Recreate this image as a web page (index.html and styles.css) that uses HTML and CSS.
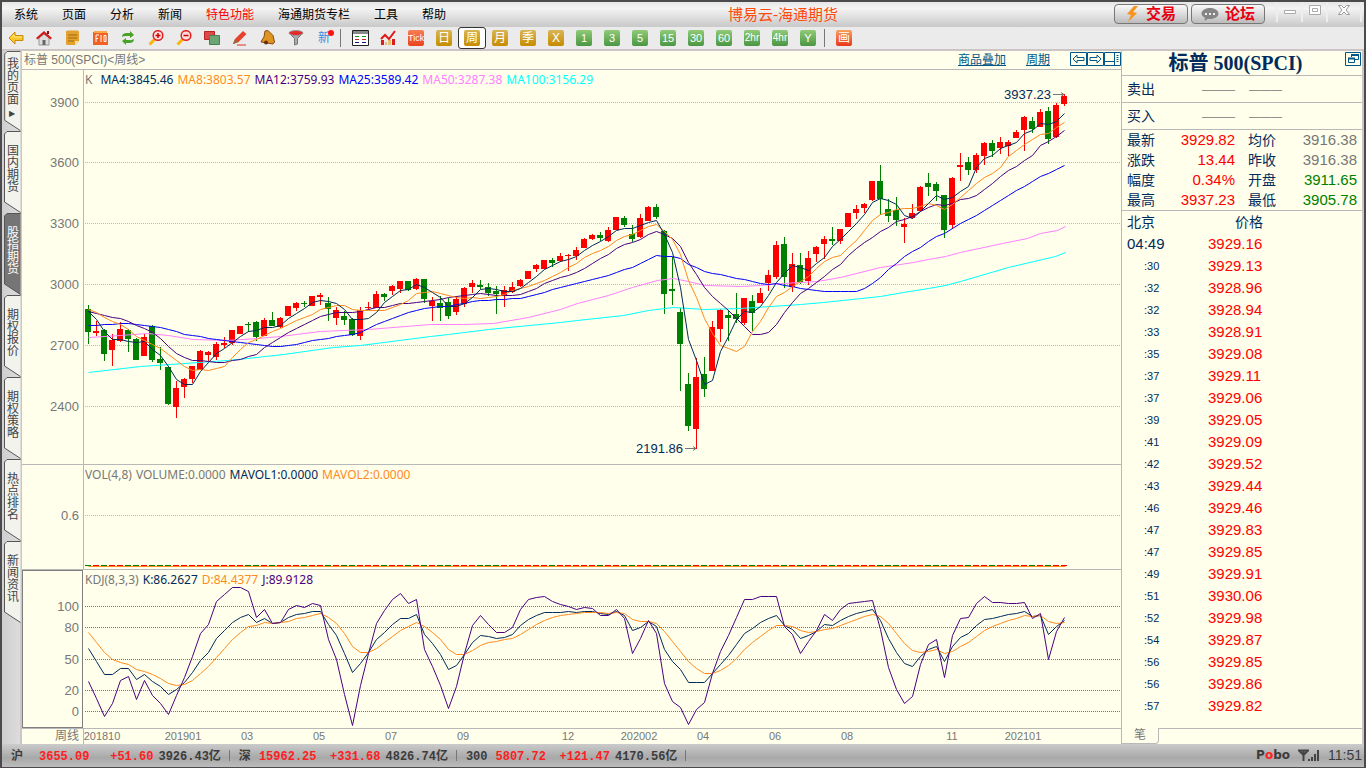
FILE: index.html
```html
<!DOCTYPE html>
<html lang="zh-CN">
<head>
<meta charset="utf-8">
<title>博易云-海通期货</title>
<link rel="stylesheet" href="styles.css">
</head>
<body>
<div class="window">
  <header class="titlebar">
    <nav class="menu">
      <button>系统</button><button>页面</button><button>分析</button><button>新闻</button><button class="hot">特色功能</button><button>海通期货专栏</button><button>工具</button><button>帮助</button>
    </nav>
    <h1 class="app-name">博易云-海通期货</h1>
    <div class="title-right">
      <button class="pill"><svg width="14" height="16" viewBox="0 0 14 16"><path d="M8 0L1 8l4 1-3 7 9-9-4-1 5-6z" fill="#f7941d"/></svg>交易</button>
      <button class="pill"><svg width="18" height="15" viewBox="0 0 18 15"><path d="M9 1c5 0 8.500 2.500 8.500 5.500S14 12 9 12q-1 0-2-.2L3.500 14l.5-3.200C2 9.800.5 8.300.5 6.500.5 3.500 4 1 9 1z" fill="#858585"/><path d="M4 6h2v2H4zM8 6h2v2H8zM12 6h2v2h-2z" fill="#eee"/></svg>论坛</button>
      <div class="win-buttons">
        <button aria-label="最小化"><svg width="12" height="10"><path d="M.5 5.500h11v3H.5z" fill="#fff" stroke="#aaa"/></svg></button>
        <button aria-label="最大化"><svg width="12" height="10"><path d="M.5.5h11v9H.5zM3.500 3.500h5v3h-5z" fill="#fff" stroke="#aaa"/></svg></button>
        <button class="wide" aria-label="关闭"><svg width="12" height="10"><path d="M.5.500h3L6 3 8.500.5h3L8 5l3.500 4.500h-3L6 7 3.500 9.500h-3L4 5z" fill="#fff" stroke="#999"/></svg></button>
      </div>
    </div>
  </header>

  <div class="toolbar">
    <button aria-label="后退"><svg width="16" height="16"><path d="M1 8l6-6v3.500h8v5H7V14z" fill="#fcc62b" stroke="#c98a0d"/><path d="M3 8l3-3v2h8" fill="none" stroke="#ffe98a"/></svg></button>
    <button aria-label="主页"><svg width="16" height="16"><path d="M3 8v7h10V8L8 4z" fill="#ddd" stroke="#999"/><path d="M6.500 10h3v5h-3z" fill="#666"/><path d="M0 8l8-7 8 7-1.500 1.500L8 4 1.500 9.500z" fill="#d01c1c"/><path d="M11 1h2v3h-2z" fill="#8c1010"/></svg></button>
    <button aria-label="便笺"><svg width="16" height="16"><path d="M2 2q0-1.500 1.500-1.500h10Q15 .5 15 2v9l-4 4H3.500Q2 15 2 13.500z" fill="#e3a230"/><path d="M4 5h9M4 8h9M4 11h6" stroke="#a06808"/><path d="M11 15v-4h4z" fill="#ffe08a"/></svg></button>
    <button aria-label="F10"><svg width="17" height="16"><path d="M1 2h5l1 1h9v12H1z" fill="#f4601f"/><path d="M2 2h13" stroke="#f7a84a" stroke-width="2"/><path d="M4 12V5h3M4 8.500h2M9 5v7M12 5.500h2v6h-2z" fill="none" stroke="#fff"/></svg></button>
    <button aria-label="刷新"><svg width="16" height="16"><path d="M2 7q0-4 5-4h3V1l4 4-4 3V6H7Q4 5.500 2 7zM14 9q0 4-5 4H6v2l-4-4 4-3v2h3q3 .5 5-1z" fill="#48a226"/></svg></button>
    <button aria-label="放大"><svg width="16" height="16"><path d="M1.500 14.500L7 9" stroke="#fab514" stroke-width="3"/><circle cx="10" cy="5.500" r="4.800" fill="#fdd" stroke="#e02222" stroke-width="1.500"/><path d="M7.500 5.500h5M10 3v5" stroke="#c00" stroke-width="1.500"/></svg></button>
    <button aria-label="缩小"><svg width="16" height="16"><path d="M1.500 14.500L7 9" stroke="#fab514" stroke-width="3"/><circle cx="10" cy="5.500" r="4.800" fill="#fdd" stroke="#e02222" stroke-width="1.500"/><path d="M7.500 5.500h5" stroke="#c00" stroke-width="1.500"/></svg></button>
    <button aria-label="叠加"><svg width="16" height="16"><path d="M.5 1.500h10v8H.5z" fill="#dd4848" stroke="#b22"/><path d="M5.500 5.500h10v9h-10z" fill="#6aa573" stroke="#49804f"/></svg></button>
    <button aria-label="画线"><svg width="16" height="16"><path d="M1 14l2-5 8-8 3.500 3-8 8z" fill="#e8402a"/><path d="M1 14l2-5 3.500 3z" fill="#9a6a3a"/><path d="M5 15h9" stroke="#e03020"/></svg></button>
    <button aria-label="预警"><svg width="16" height="16"><path d="M5 1l3-.5 5 5 1.500 6.500-1.500 2L1 12l1-2 2-3z" fill="#dd9420" stroke="#8a4b12"/><circle cx="6" cy="12.500" r="2" fill="#6b2d10"/></svg></button>
    <button aria-label="筛选"><svg width="16" height="16"><path d="M1 3l5.500 5.500V15l3-1V8.500L15 3z" fill="#aaa" stroke="#777"/><ellipse cx="8" cy="3" rx="7" ry="2.500" fill="#e52a2a" stroke="#999"/></svg></button>
    <button class="new-item">新<i></i></button>
    <span class="sep"></span>
    <button aria-label="报价表"><svg width="17" height="16"><path d="M.5.500h16v15H.5z" fill="#fff" stroke="#222"/><path d="M1 2.500h15" stroke="#888" stroke-width="3"/><path d="M3 6.500h4M10 6.500h4" stroke="#1a8a1a"/><path d="M3 9.500h4M10 9.500h4" stroke="#c22"/><path d="M3 12.500h4M10 12.500h4" stroke="#118"/></svg></button>
    <button aria-label="走势图"><svg width="17" height="16"><path d="M1 10h3v5H1zM12 9h3v6h-3z" fill="#d81e1e"/><path d="M5 12h2v3H5zM8 10h3v5H8z" fill="#e8c070"/><path d="M1 9l4-4 4 4 6-8" fill="none" stroke="#e01818" stroke-width="2"/></svg></button>
    <button><span class="chip tick">Tick</span></button>
    <button><span class="chip gold">日</span></button>
    <button class="active"><span class="chip gold">周</span></button>
    <button><span class="chip gold">月</span></button>
    <button><span class="chip gold">季</span></button>
    <button><span class="chip gold">X</span></button>
    <button><span class="chip">1</span></button>
    <button><span class="chip">3</span></button>
    <button><span class="chip">5</span></button>
    <button><span class="chip">15</span></button>
    <button><span class="chip">30</span></button>
    <button><span class="chip">60</span></button>
    <button><span class="chip small">2hr</span></button>
    <button><span class="chip small">4hr</span></button>
    <button><span class="chip">Y</span></button>
    <span class="sep"></span>
    <button><span class="chip draw">画</span></button>
  </div>

  <div class="workspace">
    <nav class="side-tabs">
      <button class="side-tab"><svg viewBox="0 0 17 82"><path d="M16.500.5H3L.5 3v68l16 10.500"/></svg><span>我的页面</span><small>▶</small></button>
      <button class="side-tab"><svg viewBox="0 0 17 82"><path d="M16.500.5H3L.5 3v68l16 10.500"/></svg><span>国内期货</span></button>
      <button class="side-tab selected"><svg viewBox="0 0 17 82"><path d="M16.500.5H3L.5 3v68l16 10.500"/></svg><span>股指期货</span></button>
      <button class="side-tab"><svg viewBox="0 0 17 82"><path d="M16.500.5H3L.5 3v68l16 10.500"/></svg><span>期权报价</span></button>
      <button class="side-tab"><svg viewBox="0 0 17 82"><path d="M16.500.5H3L.5 3v68l16 10.500"/></svg><span>期权策略</span></button>
      <button class="side-tab"><svg viewBox="0 0 17 82"><path d="M16.500.5H3L.5 3v68l16 10.500"/></svg><span>热点排名</span></button>
      <button class="side-tab"><svg viewBox="0 0 17 82"><path d="M16.500.5H3L.5 3v68l16 10.500"/></svg><span>新闻资讯</span></button>
    </nav>

    <main class="charts">
      <div class="chart-head">
        <h2>标普 500(SPCI)&lt;周线&gt;</h2>
        <a href="#">商品叠加</a>
        <a href="#">周期</a>
        <div class="head-icons">
          <button aria-label="左移"><svg width="17" height="14"><path d="M.5.500h16v13H.5zM3 7l4-4v2.500h7v3H7V11z"/></svg></button><button aria-label="右移"><svg width="17" height="14"><path d="M.5.500h16v13H.5zM14 7l-4-4v2.500H3v3h7V11z"/></svg></button><button aria-label="布局"><svg width="17" height="14"><path d="M.5.500h16v13H.5zM.5 9.500h10M10.500.500v13M12.500 3.500h2M12.500 5.500h2M12.500 7.500h2M12.500 9.500h2"/></svg></button>
        </div>
      </div>
      <section class="panel price">
        <svg id="price"></svg>
        <div class="legend"><span class="name">K</span><span class="navy k-gap">MA4:3845.46</span><span class="orange">MA8:3803.57</span><span class="purple">MA12:3759.93</span><span class="blue">MA25:3589.42</span><span class="pink">MA50:3287.38</span><span class="cyan">MA100:3156.29</span></div>
      </section>
      <section class="panel volume">
        <svg id="volume"></svg>
        <div class="legend"><span class="name">VOL(4,8)</span><span class="name">VOLUME:0.0000</span><span class="navy">MAVOL1:0.0000</span><span class="orange">MAVOL2:0.0000</span></div>
      </section>
      <section class="panel kdj">
        <svg id="kdj"></svg>
        <div class="legend"><span class="name">KDJ(8,3,3)</span><span class="navy">K:86.2627</span><span class="orange">D:84.4377</span><span class="purple">J:89.9128</span></div>
      </section>
      <div class="dates"><span>周线</span><svg id="dates"></svg></div>
    </main>

    <aside class="quote">
      <div class="quote-title"><h2>标普 500(SPCI)</h2><button aria-label="还原"><svg width="16" height="14"><path d="M.5.500h15v13H.5zM6.500 5V2.500h7v5H10M3.500 6.500h6v4h-6z"/><path d="M3 6.500h7M6 3h8" stroke-width="2"/></svg></button></div>
      <div class="side-row"><span>卖出</span><i>———</i><i>———</i></div>
      <div class="side-row"><span>买入</span><i>———</i><i>———</i></div>
      <table class="stats">
        <tr><th>最新</th><td class="up">3929.82</td><th>均价</th><td class="flat">3916.38</td></tr>
        <tr><th>涨跌</th><td class="up">13.44</td><th>昨收</th><td class="flat">3916.38</td></tr>
        <tr><th>幅度</th><td class="up">0.34%</td><th>开盘</th><td class="down">3911.65</td></tr>
        <tr><th>最高</th><td class="up">3937.23</td><th>最低</th><td class="down">3905.78</td></tr>
      </table>
      <table class="ticks">
        <thead><tr><th>北京</th><th>价格</th></tr></thead>
        <tbody>
        <tr><td class="full">04:49</td><td>3929.16</td></tr>
        <tr><td>:30</td><td>3929.13</td></tr>
        <tr><td>:32</td><td>3928.96</td></tr>
        <tr><td>:32</td><td>3928.94</td></tr>
        <tr><td>:33</td><td>3928.91</td></tr>
        <tr><td>:35</td><td>3929.08</td></tr>
        <tr><td>:37</td><td>3929.11</td></tr>
        <tr><td>:37</td><td>3929.06</td></tr>
        <tr><td>:39</td><td>3929.05</td></tr>
        <tr><td>:41</td><td>3929.09</td></tr>
        <tr><td>:42</td><td>3929.52</td></tr>
        <tr><td>:43</td><td>3929.44</td></tr>
        <tr><td>:46</td><td>3929.46</td></tr>
        <tr><td>:47</td><td>3929.83</td></tr>
        <tr><td>:47</td><td>3929.85</td></tr>
        <tr><td>:49</td><td>3929.91</td></tr>
        <tr><td>:51</td><td>3930.06</td></tr>
        <tr><td>:52</td><td>3929.98</td></tr>
        <tr><td>:54</td><td>3929.87</td></tr>
        <tr><td>:56</td><td>3929.85</td></tr>
        <tr><td>:56</td><td>3929.86</td></tr>
        <tr><td>:57</td><td>3929.82</td></tr>
        </tbody>
      </table>
      <div class="quote-foot"><button>笔</button><span></span></div>
    </aside>
  </div>

  <footer class="status">
    <div class="index"><b>沪</b><b class="last">3655.09</b><b class="chg">+51.60</b><b>3926.43亿</b></div>
    <div class="index"><b>深</b><b class="last">15962.25</b><b class="chg">+331.68</b><b>4826.74亿</b></div>
    <div class="index"><b>300</b><b class="last">5807.72</b><b class="chg">+121.47</b><b>4170.56亿</b></div>
    <div class="status-right">
      <span class="brand">P<em>o</em>bo</span>
      <svg width="22" height="13"><path d="M0 1.500h11M5.500 1v11M1.500 2l4 4 4-4" fill="none" stroke="#444" stroke-width="2"/><path d="M10 10h2v2h-2zM13 8h2v4h-2zM16 5h2v7h-2zM19 1h2v11h-2z" fill="#444"/></svg>
      <span>11:51</span>
    </div>
  </footer>
</div>
<script src="charts.js"></script>
</body>
</html>
```
FILE: styles.css
```css
* { box-sizing: border-box; }
body {
  margin: 0;
  font: 12px/16px "Liberation Sans", "Noto Sans CJK SC", sans-serif;
  color: #000;
}
h1, h2 { margin: 0; font-weight: normal; }
button {
  margin: 0;
  padding: 0;
  border: 0;
  background: none;
  font: inherit;
  color: inherit;
}
svg { display: block; }
.window {
  display: flex;
  flex-direction: column;
  height: 100vh;
  min-height: 600px;
  border: solid #4d4a4d;
  border-width: 2px 2px 1px;
  background: #ebebeb;
}

.titlebar {
  display: grid;
  grid-template-columns: 1fr auto 1fr;
  height: 25px;
  background: linear-gradient(#e6e6e6, #f4f4f4 25%, #c8c8c8);
}
.menu { display: flex; gap: 24px; padding-left: 12px; white-space: nowrap; }
.hot { color: #f00; }
.app-name { padding-left: 200px; font-size: 15px; line-height: 25px; color: #ff4a0a; }
.title-right { display: flex; justify-content: flex-end; gap: 3px; }
.pill {
  display: flex;
  align-items: center;
  justify-content: center;
  gap: 6px;
  width: 74px;
  height: 20px;
  margin-top: 2px;
  border: 1px solid #777;
  border-radius: 4px;
  background: linear-gradient(#fafafa, #bcbcbc);
  color: #e60012;
  font-size: 15px;
  font-weight: bold;
  line-height: 18px;
}
.win-buttons { display: flex; height: 20px; padding-left: 8px; padding-right: 2px; }
.win-buttons button {
  display: flex;
  justify-content: center;
  width: 25px;
  padding-top: 3px;
  border-left: 2px solid #eee;
}
.win-buttons .wide { width: 36px; border-right: 2px solid #eee; }

.toolbar { display: flex; align-items: center; height: 22px; }
.toolbar button {
  display: flex;
  flex: none;
  align-items: center;
  justify-content: center;
  width: 28px;
  height: 22px;
}
.toolbar .active { border: 1px solid #333; border-radius: 3px; background: #fff; }
.sep { width: 8px; height: 18px; background: linear-gradient(#777, #777) 2px 0 / 1px 18px no-repeat; }
.new-item { position: relative; color: #3b8de0; }
.new-item i {
  position: absolute;
  top: 3px;
  right: 4px;
  width: 6px;
  height: 6px;
  border-radius: 50%;
  background: #f11;
}
.chip {
  width: 16px;
  height: 16px;
  border-radius: 2px;
  background: linear-gradient(#8fcb77, #4b9644);
  color: #fff;
  font-size: 11px;
  line-height: 16px;
  text-align: center;
}
.chip.gold { background: linear-gradient(#d9b557, #c68c00); font-size: 12px; }
.chip.tick { background: linear-gradient(#f77d55, #e9431c); font: 9px/16px "Liberation Sans Narrow", "Liberation Sans", sans-serif; }
.chip.small { font: 10px/16px "Liberation Sans Narrow", "Liberation Sans", sans-serif; }
.chip.draw { background: linear-gradient(#f9a25c, #e8361a); font-size: 12px; }

.workspace {
  display: flex;
  flex: 1;
  min-height: 0;
  border-top: 2px solid #cdc5c5;
}
.side-tabs {
  width: 20px;
  padding-left: 2px;
  border-right: 2px solid #cdc5c5;
  background: linear-gradient(90deg, #cfcfcf, #dcdcdc);
}
.side-tab {
  position: relative;
  display: flex;
  flex-direction: column;
  justify-content: flex-start;
  width: 16px;
  height: 82px;
  padding-top: 14px;
  color: #444;
  line-height: 12px;
}
.side-tab:first-child { height: 80px; padding-top: 7px; }
.side-tab svg {
  position: absolute;
  inset: 0;
  width: 17px;
  height: 82px;
  fill: #f3f3ee;
  stroke: #555;
}
.side-tab:first-child svg { height: 80px; }
.side-tab.selected svg { fill: #757575; }
.side-tab.selected { color: #fff; }
.side-tab span { position: relative; width: 12px; margin-left: 3px; }
.side-tab small { position: relative; font: 8px/16px "DejaVu Sans", sans-serif; text-align: center; }

.charts {
  display: flex;
  flex: 1;
  flex-direction: column;
  min-width: 0;
  background: #ffffeb;
  color: #777;
}
.chart-head {
  display: flex;
  height: 19px;
  border-bottom: 1px solid #b8b8b8;
  line-height: 18px;
}
.chart-head h2 { flex: 1; padding-left: 2px; font-size: 12px; }
.chart-head a { margin-right: 20px; color: #00588a; }
.head-icons { display: flex; align-items: flex-start; padding-top: 1px; fill: none; stroke: #00588a; }
.panel { position: relative; min-height: 0; border-bottom: 1px solid #b8b8b8; }
.panel svg { width: 100%; height: 100%; }
.price { flex: 394; }
.volume { flex: 104; }
.kdj { flex: 158; }
.legend {
  position: absolute;
  top: 2px;
  left: 63px;
  display: flex;
  gap: 4px;
  font-family: "Noto Sans", sans-serif;
}
.k-gap { margin-left: 4px; }
.navy { color: #002b5c; }
.orange { color: #ff8a1c; }
.purple { color: #4b0082; }
.blue { color: #00f; }
.pink { color: #ff80ff; }
.cyan { color: #0ff; }
.dates { display: flex; height: 15px; line-height: 15px; }
.dates span { width: 61px; padding-right: 4px; text-align: right; }
.dates svg { flex: 1; width: 0; height: 15px; }
#dates text { font-size: 11px; fill: #777; }
.axis-label { font-size: 13px; fill: #777; text-anchor: end; }
.mark { font-size: 13px; fill: #002b5c; text-anchor: end; }
.grid { stroke: #bbb; stroke-dasharray: 1 1; }
.kdj .grid { stroke: #777; }
.frame { fill: none; stroke: #b8b8b8; }
.focus { fill: none; stroke: #808080; }

.quote {
  display: flex;
  flex-direction: column;
  width: 243px;
  border-left: 1px solid #b8b8b8;
  border-right: 2px solid #cdc5c5;
  background: #ffffeb;
  color: #002b5c;
}
.quote-title { display: flex; height: 25px; border-bottom: 1px solid #b8b8b8; }
.quote-title h2 {
  flex: 1;
  padding-left: 4px;
  font: bold 20px/24px "Liberation Serif", "Noto Sans CJK SC", serif;
  text-align: center;
}
.quote-title button { display: flex; align-items: flex-start; padding: 1px 1px 0 0; fill: none; stroke: #00588a; }
.side-row {
  display: flex;
  height: 27px;
  border-bottom: 1px solid #b8b8b8;
  font-size: 14px;
  line-height: 26px;
}
.side-row span { width: 80px; padding-left: 5px; }
.side-row i { width: 47px; color: #777; font: 11px/26px "Liberation Sans", sans-serif; }
.stats, .ticks { border-collapse: collapse; table-layout: fixed; width: 100%; font-size: 14px; }
.stats th, .ticks th { padding: 0 0 0 5px; font-weight: normal; text-align: left; }
.stats td { padding: 0; font-size: 15px; text-align: right; }
.stats tr { height: 20px; line-height: 18px; }
.stats th { width: 40px; }
.stats th:nth-child(3) { width: 54px; padding-left: 13px; }
.stats td:last-child { padding-right: 5px; }
.up, .ticks td:last-child { color: #f00; }
.flat { color: #777; }
.down { color: #008000; }
.ticks { border-top: 1px solid #b8b8b8; }
.ticks tr { height: 22px; line-height: 20px; }
.ticks th:first-child { width: 86px; }
.ticks th:last-child { padding-left: 27px; }
.ticks td { padding: 0 0 0 22px; font-size: 11px; }
.ticks td:last-child { padding-left: 0; font-size: 15px; }
.ticks .full { padding-left: 5px; font-size: 15px; }
.quote-foot { display: flex; height: 16px; margin-top: auto; color: #777; line-height: 15px; }
.quote-foot button { width: 37px; border: solid #b8b8b8; border-width: 0 1px 1px 0; border-radius: 0 0 4px 0; }
.quote-foot span { flex: 1; border-top: 1px solid #b8b8b8; }

.status {
  display: flex;
  height: 23px;
  padding-left: 9px;
  background: linear-gradient(#cbcbcb, #a8a8a8 60%, #bcbcbc);
  color: #3c3c3c;
  font-family: "Liberation Mono", "Noto Sans CJK SC", monospace;
  line-height: 26px;
  white-space: nowrap;
}
.index { display: flex; padding-right: 9px; margin-right: 9px; background: linear-gradient(#777, #777) right 6px / 1px 11px no-repeat; }
.index b:first-child { margin-right: 8px; }
.index:first-child b:first-child { margin-right: 16px; }
.index .last, .index .chg { color: #ff2020; }
.index .chg { width: 64px; margin-right: 5px; text-align: right; }
.status-right { display: flex; flex: 1; align-items: center; justify-content: flex-end; gap: 8px; padding-right: 2px; font: 14px/25px "Liberation Sans", sans-serif; }
.brand { font: bold 12px/25px "DejaVu Sans", sans-serif; }
.brand em { color: #ff2020; font-style: normal; }
```
FILE: charts.js
```js
const NS = 'http://www.w3.org/2000/svg';
const STEP = 8, FIRST = 88;

// Weekly candles: direction, high, body top, body bottom, low (plot units).
const candles = `g305,309,332,344 r321,331,333,336 g329,330,354,361 r334,340,350,366 r322,329,341,342
g329,330,339,352 g338,339,360,360 r334,337,356,356 g325,326,360,362 g347,359,363,370 g366,367,404,405
r381,388,407,418 r378,379,387,398 r366,366,379,383 r350,351,370,370 r351,352,355,361 r342,344,357,360
r337,343,345,348 r330,330,343,345 r326,326,334,334 g322,324,325,332 g321,322,337,341 r318,320,336,336
g312,320,326,326 r317,318,327,328 r306,306,316,316 r302,303,308,311 g301,303,304,307 r296,296,306,306
r293,295,297,305 g297,303,309,321 r307,310,318,325 g311,316,320,325 g318,319,335,336 r307,310,336,340
r302,307,308,310 r291,294,308,308 g293,294,297,301 r285,286,291,295 r281,281,289,293 g281,281,290,291
r278,279,289,290 g279,279,299,303 r297,301,306,321 g296,303,308,321 g298,302,316,319 r296,299,312,315
r287,288,304,307 r280,283,287,293 g280,285,287,289 g283,287,293,296 g286,291,294,314 r286,290,296,307
r282,287,292,293 r279,280,286,287 r271,271,279,279 r264,265,269,272 r260,260,269,269 g258,260,263,267
r253,256,261,262 r254,255,256,271 r247,250,256,260 r238,239,248,248 r234,235,239,240 g232,235,238,241
r227,230,241,242 r217,217,230,230 g216,218,225,227 g225,234,239,242 r214,218,237,238 r206,207,221,221
g204,207,217,219 g230,231,294,314 g257,289,291,305 g308,312,344,391 g373,384,426,431 r358,377,429,449
g357,374,389,397 r321,327,371,371 r309,310,329,342 g310,315,318,341 g293,314,319,323 r298,298,323,325
g295,301,313,331 r288,293,303,303 r270,275,283,291 r241,245,277,279 g237,244,277,288 r253,264,287,292
g253,265,282,284 r251,258,281,285 r246,247,254,262 r236,239,244,259 g227,239,241,245 r229,229,241,244
r213,213,227,227 r205,209,213,219 r203,204,208,213 r181,181,200,201 g165,181,199,215 g199,209,216,222
g197,210,220,226 r218,224,227,243 r204,213,218,219 r186,187,211,212 g173,183,187,196 g182,184,191,201
g195,195,230,238 r177,178,225,229 r153,165,167,181 g157,162,170,175 r153,155,170,173 r142,143,156,165
g140,143,151,157 r137,142,148,154 r140,142,146,156 r130,132,138,138 r116,117,130,151 g117,121,129,133
r109,112,127,127 g107,111,139,144 r103,105,137,138 r94,96,104,106`.split(/\s+/).map(s => {
  const [high, top, bottom, low] = s.slice(1).split(',').map(Number);
  return { up: s[0] === 'r', high, top, bottom, low, close: s[0] === 'r' ? top : bottom };
});

// Averages for the weeks before a full window is available.
const averages = [
  [25, '#00f', [325,325,324,324,323,323,324,325,326,327,329,331,334,335,336,338,339,340,341,342,343,344,345,346]],
  [12, '#4b0082', [311,313,315,317,318,321,325,328,332,338,346]],
  [8, '#ff8a1c', [309,312,317,321,324,329,336]],
  [4, '#002b5c', [311,319,331]]
];
const ma50 = [[88,337],[120,335],[147,333],[168,335],[193,339],[227,340],[257,338],[280,336],[320,331],[343,330],[368,329],[430,324],[463,324],[493,323],[528,317],[560,309],[577,303],[608,295],[632,287],[657,280],[673,278],[688,281],[705,285],[740,286],[760,285],[783,283],[817,281],[840,277],[880,267],[913,262],[928,259],[945,256],[960,252],[1002,243],[1027,238],[1040,233],[1057,230],[1065,226]];
const ma100 = [[88,372],[140,366],[170,364],[227,360],[247,358],[283,354],[333,347],[360,345],[430,336],[448,334],[488,329],[560,322],[577,320],[623,315],[648,310],[673,307],[705,309],[740,308],[800,304],[823,302],[880,296],[903,292],[928,288],[945,285],[960,281],[1008,267],[1055,256],[1065,252]];

const jValues = [29,12,-5,8,30,33,11,30,15,8,-3,15,32,52,74,83,105,111,118,118,114,90,97,84,85,97,101,99,103,101,69,50,16,-13,25,55,84,96,107,112,103,107,59,43,25,3,24,55,82,91,83,75,75,80,97,107,109,110,105,102,100,97,99,98,91,91,97,89,55,70,87,74,27,10,4,-12,2,9,36,57,72,90,107,107,110,110,110,81,73,55,67,77,92,87,97,103,104,105,106,78,42,21,8,14,45,64,69,32,72,89,90,103,110,104,104,103,103,104,89,93,50,76,90];

function board(id, x0, y0, w, h) {
  const svg = document.getElementById(id);
  svg.replaceChildren();
  const box = svg.getBoundingClientRect();
  const X = x => Math.round((x - x0) * box.width / w);
  const Y = y => Math.round((y - y0) * box.height / h);
  const add = (tag, attrs, text) => {
    const el = document.createElementNS(NS, tag);
    for (const k in attrs) el.setAttribute(k, attrs[k]);
    if (text) el.textContent = text;
    svg.append(el);
  };
  return {
    X, Y, add, box,
    line: (pts, color) => add('polyline', { points: pts.map(([x, y]) => `${X(x) + 0.5},${Y(y) + 0.5}`).join(' '), fill: 'none', stroke: color }),
    grid(y, label) {
      add('path', { class: 'grid', d: `M63 ${Y(y) + 0.5}H${box.width}` });
      add('text', { class: 'axis-label', x: 57, y: Y(y) + 5 }, label);
    },
    arrow(x, y, label) {
      add('text', { class: 'mark', x: X(x) - 13, y: Y(y) + 5 }, label);
      add('path', { d: `M${X(x) - 11} ${Y(y) + 0.5}h11m-3 -2l3 2l-3 2`, fill: 'none', stroke: '#777' });
    }
  };
}

function draw() {
  const p = board('price', 22, 70, 1099, 394);
  [102, 162, 223, 284, 345, 406].forEach((y, i) => p.grid(y, String(3900 - 300 * i)));
  p.add('path', { class: 'frame', d: `M61.500 0V${p.box.height}` });
  candles.forEach((c, i) => {
    const x = p.X(FIRST + STEP * i), fill = c.up ? '#f00' : '#008000';
    p.add('rect', { x, y: p.Y(c.high), width: 1, height: Math.max(1, p.Y(c.low) - p.Y(c.high)), fill });
    p.add('rect', { x: x - 3, y: p.Y(c.top), width: 6, height: Math.max(1, p.Y(c.bottom) - p.Y(c.top)), fill });
  });
  p.line(ma100, '#0ff');
  p.line(ma50, '#ff80ff');
  for (const [n, color, lead] of averages) {
    p.line(candles.map((c, i) => {
      const y = i < n - 1 ? lead[i] : candles.slice(i - n + 1, i + 1).reduce((s, k) => s + k.close, 0) / n;
      return [FIRST + STEP * i, y];
    }), color);
  }
  p.arrow(1064, 94, '3937.23');
  p.arrow(696, 448, '2191.86');

  const v = board('volume', 22, 465, 1099, 104);
  v.grid(515, '0.6');
  v.add('path', { class: 'frame', d: `M61.500 0V${v.box.height}` });
  v.line([[88, 566], [1065, 566]], '#ff8a1c');
  candles.forEach((c, i) => v.add('rect', { x: v.X(FIRST + STEP * i) - 3, y: v.Y(565), width: 6, height: 1, fill: c.up ? '#f00' : '#008000' }));

  const k = board('kdj', 22, 570, 1099, 158);
  const ky = value => 711 - value * 1.05;
  [100, 80, 50, 20, 0].forEach(n => k.grid(ky(n), String(n)));
  k.add('rect', { class: 'focus', x: 0.5, y: 0.5, width: 60, height: k.box.height - 1 });
  let d = 82.8;
  const kPts = [], dPts = [], jPts = [];
  jValues.forEach((j, i) => {
    const x = FIRST + STEP * i, kv = (3 * j + 4 * d) / 7;
    d = (2 * d + kv) / 3;
    kPts.push([x, ky(kv)]);
    dPts.push([x, ky(d)]);
    jPts.push([x, ky(j)]);
  });
  k.line(kPts, '#002b5c');
  k.line(dPts, '#ff8a1c');
  k.line(jPts, '#4b0082');

  const t = board('dates', 83, 729, 1038, 15);
  [[102, '201810'], [183, '201901'], [247, '03'], [319, '05'], [391, '07'], [463, '09'], [568, '12'], [639, '202002'], [703, '04'], [775, '06'], [847, '08'], [952, '11'], [1023, '202101']]
    .forEach(([x, s]) => t.add('text', { x: t.X(x), y: 11, 'text-anchor': 'middle' }, s));
  t.add('path', { class: 'frame', d: 'M.5 0V15' });
}
draw();
addEventListener('resize', draw);
```
